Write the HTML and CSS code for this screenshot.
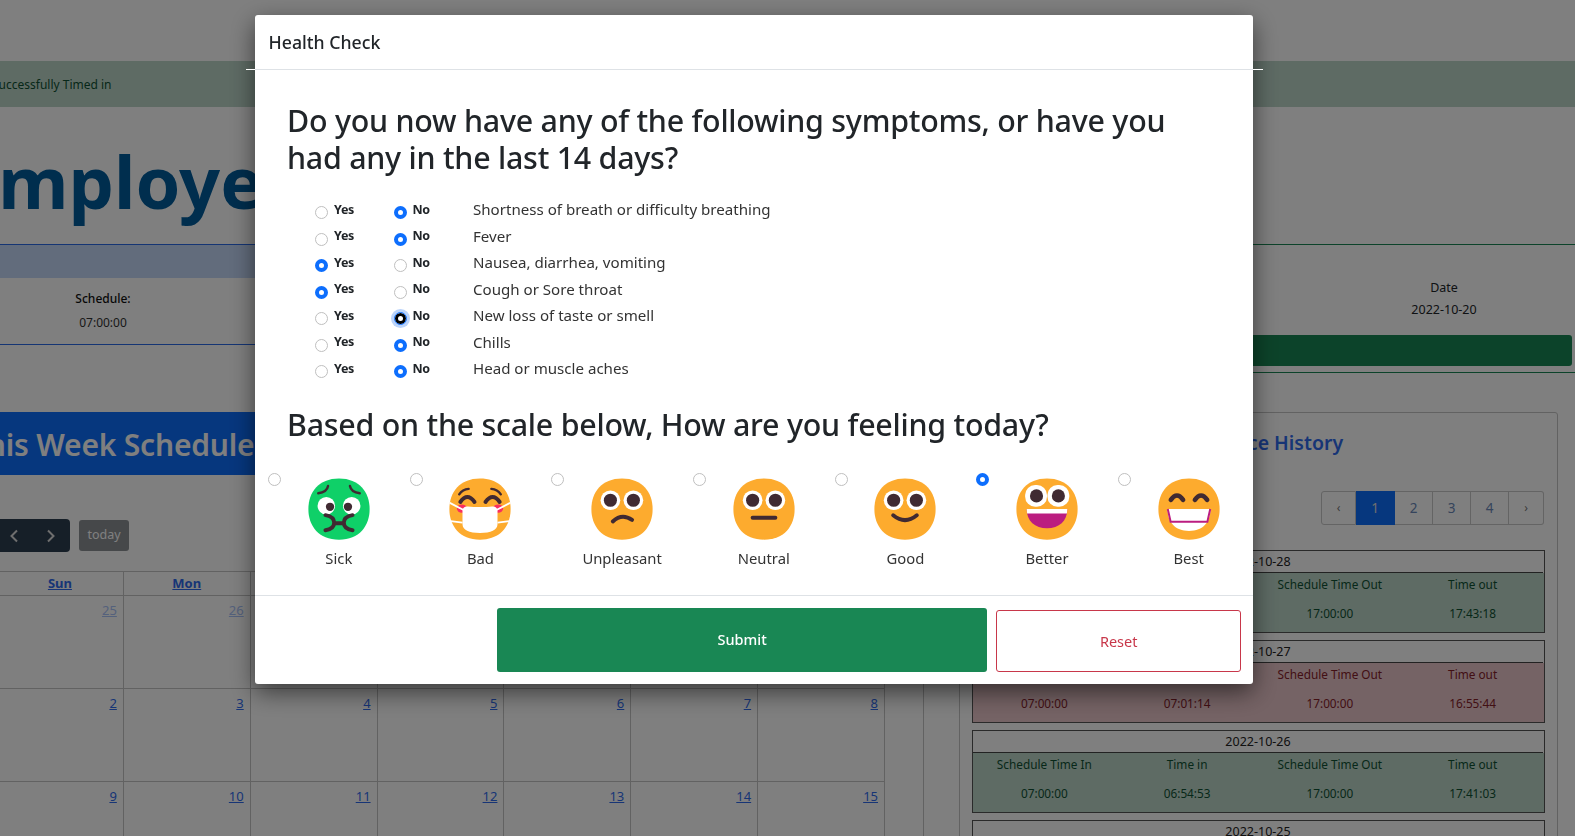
FILE: index.html
```html
<!DOCTYPE html>
<html lang="en">
<head>
<meta charset="utf-8">
<title>Employee Attendance</title>
<link rel="stylesheet" href="styles.css">
</head>
<body>
<main class="page">
  <div class="alert">Successfully Timed in</div>
  <h1 class="title">Employee Attendance</h1>
  <section class="status">
    <div class="status-left">
      <div class="band"></div>
      <div class="sched"><div class="sched-cell"><strong>Schedule:</strong><span>07:00:00</span></div></div>
    </div>
    <div class="status-right">
      <div class="date-cell"><strong>Date</strong><span>2022-10-20</span></div>
      <div class="green-bar"></div>
    </div>
  </section>
  <section class="lower">
    <div class="left-col">
      <div class="banner">This Week Schedule</div>
      <div class="toolbar">
        <div class="nav-group">
          <svg class="chev" viewBox="0 0 12 16"><path d="M8.500 2.500 3 8l5.500 5.500"/></svg>
          <svg class="chev" viewBox="0 0 12 16"><path d="M3.500 2.500 9 8l-5.500 5.500"/></svg>
        </div>
        <div class="today">today</div>
      </div>
      <div class="calendar">
        <a class="dow">Sun</a><a class="dow">Mon</a><a class="dow">Tue</a><a class="dow">Wed</a><a class="dow">Thu</a><a class="dow">Fri</a><a class="dow">Sat</a>
        <div class="day dim"><a>25</a></div><div class="day dim"><a>26</a></div><div class="day dim"><a>27</a></div><div class="day dim"><a>28</a></div><div class="day dim"><a>29</a></div><div class="day dim"><a>30</a></div><div class="day"><a>1</a></div>
        <div class="day"><a>2</a></div><div class="day"><a>3</a></div><div class="day"><a>4</a></div><div class="day"><a>5</a></div><div class="day"><a>6</a></div><div class="day"><a>7</a></div><div class="day"><a>8</a></div>
        <div class="day"><a>9</a></div><div class="day"><a>10</a></div><div class="day"><a>11</a></div><div class="day"><a>12</a></div><div class="day"><a>13</a></div><div class="day"><a>14</a></div><div class="day"><a>15</a></div>
      </div>
    </div>
    <div class="history">
      <h3 class="history-title">Attendance History</h3>
      <div class="pager"><span class="pg edge">‹</span><span class="pg on">1</span><span class="pg">2</span><span class="pg">3</span><span class="pg">4</span><span class="pg edge">›</span></div>
      <div class="rec">
        <div class="rec-date">2022-10-28</div>
        <div class="rec-body ok"><span>Schedule Time In</span><span>Time in</span><span>Schedule Time Out</span><span>Time out</span><b>07:00:00</b><b>06:52:10</b><b>17:00:00</b><b>17:43:18</b></div>
      </div>
      <div class="rec">
        <div class="rec-date">2022-10-27</div>
        <div class="rec-body bad"><span>Schedule Time In</span><span>Time in</span><span>Schedule Time Out</span><span>Time out</span><b>07:00:00</b><b>07:01:14</b><b>17:00:00</b><b>16:55:44</b></div>
      </div>
      <div class="rec">
        <div class="rec-date">2022-10-26</div>
        <div class="rec-body ok"><span>Schedule Time In</span><span>Time in</span><span>Schedule Time Out</span><span>Time out</span><b>07:00:00</b><b>06:54:53</b><b>17:00:00</b><b>17:41:03</b></div>
      </div>
      <div class="rec">
        <div class="rec-date">2022-10-25</div>
      </div>
    </div>
  </section>
</main>

<div class="backdrop"></div>

<form class="modal">
  <header class="modal-head"><h5 class="modal-title">Health Check</h5></header>
  <div class="rule"></div>
  <div class="modal-body">
    <h2 class="q q-first">Do you now have any of the following symptoms, or have you had any in the last 14 days?</h2>
    <div class="symptoms">
      <div class="sym"><label class="opt"><input type="radio" name="s1">Yes</label><label class="opt"><input type="radio" name="s1" checked>No</label><span>Shortness of breath or difficulty breathing</span></div>
      <div class="sym"><label class="opt"><input type="radio" name="s2">Yes</label><label class="opt"><input type="radio" name="s2" checked>No</label><span>Fever</span></div>
      <div class="sym"><label class="opt"><input type="radio" name="s3" checked>Yes</label><label class="opt"><input type="radio" name="s3">No</label><span>Nausea, diarrhea, vomiting</span></div>
      <div class="sym"><label class="opt"><input type="radio" name="s4" checked>Yes</label><label class="opt"><input type="radio" name="s4">No</label><span>Cough or Sore throat</span></div>
      <div class="sym"><label class="opt"><input type="radio" name="s5">Yes</label><label class="opt"><input class="focus" type="radio" name="s5" checked>No</label><span>New loss of taste or smell</span></div>
      <div class="sym"><label class="opt"><input type="radio" name="s6">Yes</label><label class="opt"><input type="radio" name="s6" checked>No</label><span>Chills</span></div>
      <div class="sym"><label class="opt"><input type="radio" name="s7">Yes</label><label class="opt"><input type="radio" name="s7" checked>No</label><span>Head or muscle aches</span></div>
    </div>
    <h2 class="q q-second">Based on the scale below, How are you feeling today?</h2>
  </div>
  <div class="scale">
    <label class="feel"><input type="radio" name="feel">
      <svg class="face" viewBox="0 0 32 32"><path class="skin-green" d="M16 30C25.330 30 30 23.730 30 16C30 8.270 25.330 2 16 2C6.660 2 2 8.270 2 16C2 23.730 6.660 30 16 30Z"/><circle class="white" cx="10.200" cy="14.500" r="4"/><circle class="white" cx="21.800" cy="14.500" r="4"/><circle class="ink" cx="11.900" cy="15" r="1.900"/><circle class="ink" cx="20.100" cy="15" r="1.900"/><path class="line thin" d="M6.500 8.800C9 8.500 10.700 7.200 11 5.500M25.500 8.800C23 8.500 21.300 7.200 21 5.500"/><path class="line" d="M9.800 18.800C12.500 19.300 13.800 20.800 13.800 22.300C13.800 23.900 12.500 25.300 9.800 25.700M22.200 18.800C19.500 19.300 18.200 20.800 18.200 22.300C18.200 23.900 19.500 25.300 22.200 25.700M13.800 22.500H18.200"/></svg>
      <span>Sick</span></label>
    <label class="feel"><input type="radio" name="feel">
      <svg class="face" viewBox="0 0 32 32"><path class="skin" d="M16 30C25.330 30 30 23.730 30 16C30 8.270 25.330 2 16 2C6.660 2 2 8.270 2 16C2 23.730 6.660 30 16 30Z"/><ellipse class="blush" cx="7.700" cy="15.800" rx="2.300" ry="1.900"/><ellipse class="blush" cx="24.300" cy="15.800" rx="2.300" ry="1.900"/><path class="line" d="M7 12.800Q10.200 8.300 13.500 12.800M18.500 12.800Q21.800 8.300 25 12.800"/><path class="line thin" d="M6.500 9.300Q8 7 10.800 6.800M25.500 9.300Q24 7 21.200 6.800"/><path class="strap" d="M2.200 13.200 8.500 16.500M29.800 13.200 23.500 16.500M2.600 21.500 8 22.200M29.400 21.500 24 22.200"/><path class="white" d="M8 17C8 15.500 9 14.600 10.500 14.900L13 15.100H19L21.500 14.900C23 14.600 24 15.500 24 17V23C24 25.500 21 27 16 27C11 27 8 25.500 8 23Z"/></svg>
      <span>Bad</span></label>
    <label class="feel"><input type="radio" name="feel">
      <svg class="face" viewBox="0 0 32 32"><path class="skin" d="M16 30C25.330 30 30 23.730 30 16C30 8.270 25.330 2 16 2C6.660 2 2 8.270 2 16C2 23.730 6.660 30 16 30Z"/><circle class="white" cx="10.700" cy="12" r="4.500"/><circle class="white" cx="21.200" cy="12" r="4.500"/><circle class="ink" cx="10.700" cy="12" r="3"/><circle class="ink" cx="21.200" cy="12" r="3"/><path class="line" d="M11.800 21.700Q16 17.700 20.600 21"/></svg>
      <span>Unpleasant</span></label>
    <label class="feel"><input type="radio" name="feel">
      <svg class="face" viewBox="0 0 32 32"><path class="skin" d="M16 30C25.330 30 30 23.730 30 16C30 8.270 25.330 2 16 2C6.660 2 2 8.270 2 16C2 23.730 6.660 30 16 30Z"/><circle class="white" cx="10.800" cy="12" r="4.500"/><circle class="white" cx="21.200" cy="12" r="4.500"/><circle class="ink" cx="10.800" cy="12" r="3"/><circle class="ink" cx="21.200" cy="12" r="3"/><path class="line" d="M10.800 20H21.200"/></svg>
      <span>Neutral</span></label>
    <label class="feel"><input type="radio" name="feel">
      <svg class="face" viewBox="0 0 32 32"><path class="skin" d="M16 30C25.330 30 30 23.730 30 16C30 8.270 25.330 2 16 2C6.660 2 2 8.270 2 16C2 23.730 6.660 30 16 30Z"/><circle class="white" cx="10.800" cy="12" r="4.500"/><circle class="white" cx="21.200" cy="12" r="4.500"/><circle class="ink" cx="10.800" cy="12" r="3"/><circle class="ink" cx="21.200" cy="12" r="3"/><path class="line" d="M10.600 18.900Q16 23.300 21.400 18.900"/></svg>
      <span>Good</span></label>
    <label class="feel"><input type="radio" name="feel" checked>
      <svg class="face" viewBox="0 0 32 32"><path class="skin" d="M16 30C25.330 30 30 23.730 30 16C30 8.270 25.330 2 16 2C6.660 2 2 8.270 2 16C2 23.730 6.660 30 16 30Z"/><rect class="white" x="6" y="5" width="10" height="10" rx="4.600"/><rect class="white" x="16.200" y="5" width="10" height="10" rx="4.600"/><circle class="ink" cx="11.200" cy="10" r="3"/><circle class="ink" cx="21.200" cy="10" r="3"/><path class="magenta" d="M6.700 16H25.300C25.300 21.500 21.500 24.800 16 24.800C10.500 24.800 6.700 21.500 6.700 16Z"/><path class="white" d="M6.700 16H25.300L25.100 18H6.900Z"/></svg>
      <span>Better</span></label>
    <label class="feel"><input type="radio" name="feel">
      <svg class="face" viewBox="0 0 32 32"><path class="skin" d="M16 30C25.330 30 30 23.730 30 16C30 8.270 25.330 2 16 2C6.660 2 2 8.270 2 16C2 23.730 6.660 30 16 30Z"/><path class="white" d="M6.200 16H25.800C25.800 22 22.500 26 16 26C9.500 26 6.200 22 6.200 16Z"/><path class="magenta-line" d="M6.300 16 7.600 21.800H24.400L25.700 16"/><path class="line thick" d="M7.700 11.800Q10.500 7.800 13.300 11.800M18.700 11.800Q21.500 7.800 24.300 11.800"/></svg>
      <span>Best</span></label>
  </div>
  <footer class="modal-foot">
    <button class="btn-submit" type="button">Submit</button>
    <button class="btn-reset" type="button">Reset</button>
  </footer>
</form>
</body>
</html>
```
FILE: styles.css
```css
* { box-sizing: border-box; }
html, body { margin: 0; height: 100%; overflow: hidden; }
body { font-family: "Noto Sans", "Open Sans", sans-serif; color: #212529; background: #fff; font-size: 13px; }

.page { width: 1575px; height: 836px; overflow: hidden; padding-top: 61px; }
.alert { height: 46px; background: #bcd6c9; color: #0f5132; line-height: 47px; font-size: 12px; margin-left: -8px; }
.title { height: 137px; margin: 0 0 0 -42px; color: #005c9c; font-size: 72px; font-weight: 700; line-height: 148px; white-space: nowrap; }

.status { display: flex; height: 129px; align-items: flex-start; }
.status-left { width: 800px; height: 101px; border-top: 1px solid #2a6ae8; border-bottom: 1px solid #2a6ae8; }
.band { height: 33px; background: #c4d8f8; }
.sched { padding-top: 12px; }
.sched-cell { width: 206px; display: flex; flex-direction: column; align-items: center; gap: 7px; font-size: 12px; }
.sched-cell strong { font-weight: 500; color: #111; }
.sched-cell span { color: #333; }
.status-right { width: 775px; height: 129px; border-top: 1px solid #198754; border-bottom: 1px solid #198754; display: flex; flex-direction: column; padding-top: 34px; }
.date-cell { margin-left: 544px; width: 200px; display: flex; flex-direction: column; align-items: center; gap: 4px; font-size: 12.500px; line-height: 18px; }
.date-cell strong { font-weight: 400; }
.green-bar { margin: 16px 3px 0 0; height: 31px; background: #198754; border-radius: 3px; }

.lower { display: flex; padding-top: 39px; }
.left-col { width: 959px; flex: none; background: linear-gradient(#c4c4c4, #c4c4c4) 923px 0 / 1px 100% no-repeat; }
.banner { width: 400px; height: 63px; background: #0d6efd; color: #fff; margin-left: -30px; font-size: 30px; letter-spacing: -.2px; font-weight: 600; line-height: 66px; white-space: nowrap; }
.toolbar { display: flex; align-items: center; gap: 9px; height: 33px; margin-top: 44px; }
.nav-group { width: 70px; height: 33px; background: #2c3e50; border-radius: 0 4px 4px 0; display: flex; align-items: center; gap: 23px; padding-left: 8px; }
.chev { width: 13px; height: 16px; fill: none; stroke: #ddd; stroke-width: 2; }
.today { width: 50px; height: 31px; background: #8c9095; color: #fff; border-radius: 3px; font-size: 12.500px; line-height: 30px; text-align: center; }
.calendar { margin: 19px 0 0 -3px; width: 888px; display: grid; grid-template-columns: repeat(7, 126.860px); grid-template-rows: 24px; grid-auto-rows: 93px; border-top: 1px solid #c4c4c4; border-right: 1px solid #c4c4c4; }
.dow { grid-row: 1; height: 24px; text-align: center; font-weight: 700; font-size: 13px; line-height: 22px; color: #2f6bed; text-decoration: underline; border-right: 1px solid #c4c4c4; border-bottom: 1px solid #c4c4c4; }
.day { border-right: 1px solid #c4c4c4; border-bottom: 1px solid #c4c4c4; text-align: right; padding: 5px 6px 0 0; font-size: 13px; color: #2f6bed; text-decoration: underline; }
.day.dim { color: #a8c2f8; }

.history { width: 599px; height: 460px; border: 1px solid #c4c4c4; padding: 12px; border-radius: 3px; flex: none; }
.history-title { margin: 5px 0 0 187px; font-size: 19.500px; font-weight: 600; line-height: 26px; color: #2f6bed; white-space: nowrap; }
.pager { display: flex; justify-content: flex-end; margin: 35px 1px 25px 0; height: 34px; }
.pg { width: 38px; border: 1px solid #c8c8c8; border-left: 0; text-align: center; line-height: 32px; font-size: 13.500px; color: #6a88b8; }
.pg.edge { width: 35px; font-size: 12px; color: #777; }
.pg.edge:first-child { border-left: 1px solid #c8c8c8; border-radius: 3px 0 0 3px; }
.pg.edge:last-child { border-radius: 0 3px 3px 0; }
.pg.on { background: #0d6efd; color: #ddd; border-color: #0d6efd; width: 39px; }
.rec { border: 1px solid #555; margin-bottom: 7px; height: 83px; }
.rec-date { height: 22px; text-align: center; line-height: 21px; font-size: 12.500px; color: #222; border-bottom: 1px solid #444; margin-right: 1px; }
.rec-body { height: 59px; display: grid; grid-template-columns: repeat(4, 1fr); grid-template-rows: 21px 1fr; text-align: center; font-size: 11.800px; }
.rec-body span, .rec-body b { font-weight: 400; line-height: 19px; padding-top: 2px; }
.rec-body b { line-height: 38px; padding-top: 0; }
.rec-body.ok { background: #bcd6c9; color: #0f5132; }
.rec-body.bad { background: #ebc6ca; color: #842029; }

.backdrop { position: fixed; inset: 0; background: rgba(0,0,0,.5); }

.modal { position: fixed; left: 255px; top: 15px; width: 998px; height: 669px; background: #fff; border-radius: 3px; box-shadow: 0 8px 24px rgba(0,0,0,.55); display: flex; flex-direction: column; }
.modal-head { height: 54px; display: flex; align-items: center; padding-left: 13.500px; }
.modal-title { margin: 0; font-size: 17.700px; font-weight: 500; color: #212529; }
.rule { height: 1px; margin: 0 -10px 0 -9px; background: linear-gradient(90deg, #fff 9px, #dee2e6 9px, #dee2e6 calc(100% - 10px), #fff calc(100% - 10px)); }
.modal-body { padding: 32px 32px 0; }
.q { margin: 0; font-size: 30.400px; line-height: 37px; letter-spacing: -.25px; font-weight: 500; color: #212529; }
.symptoms { margin-top: 21.500px; padding-left: 28px; }
.sym { display: grid; grid-template-columns: 78.500px 79.500px 1fr; height: 26.500px; align-items: center; font-size: 15.100px; color: #333; line-height: 20px; }
.sym > span { margin-top: -3px; }
.opt { display: flex; align-items: center; gap: 6px; padding-bottom: 2px; font-size: 12.500px; letter-spacing: -.3px; font-weight: 700; color: #212529; }
input[type=radio] { appearance: none; -webkit-appearance: none; margin: 0; width: 13px; height: 13px; border: 1px solid #bfbfbf; border-radius: 50%; background: #fff; flex: none; }
input[type=radio]:checked { border: 4px solid #0d6efd; }
.opt input { margin-top: 6px; }
input.focus[type=radio]:checked { border: 1.500px solid #0d6efd; box-shadow: inset 0 0 0 3px #000, 0 0 0 3px #bcd4fa; }
.q-second { margin-top: 23.200px; }
.scale { display: grid; grid-template-columns: repeat(7, 141.650px); padding-left: 13px; height: 152px; padding-top: 31px; }
.feel { display: grid; grid-template-columns: 1fr; justify-items: center; align-content: start; position: relative; font-size: 14.800px; color: #333; }
.feel input { position: absolute; left: 0; top: -1px; }
.face { width: 70px; height: 70px; display: block; }
.feel span { margin-top: 3px; line-height: 22px; }
.skin { fill: #fdab2e; }
.skin-green { fill: #0fd068; }
.white { fill: #fff; }
.ink { fill: #402a32; }
.line { fill: none; stroke: #402a32; stroke-width: 1.800; stroke-linecap: round; }
.line.thin { stroke-width: 1.100; }
.line.thick { stroke-width: 2.100; }
.blush { fill: #f92f60; }
.strap { fill: none; stroke: #fff; stroke-width: .8; }
.magenta { fill: #bb1d80; }
.magenta-line { fill: none; stroke: #bb1d80; stroke-width: .9; }
.modal-foot { border-top: 1px solid #dee2e6; flex: 1; display: flex; align-items: flex-end; padding: 0 12px 12px 242px; gap: 9px; }
button { font-family: inherit; border-radius: 3px; font-size: 14.500px; cursor: pointer; }
.btn-submit { width: 491px; height: 64px; border: 0; background: #198754; color: #fff; font-weight: 500; padding-bottom: 4px; }
.btn-reset { width: 245px; height: 62px; border: 1px solid #c8374a; background: #fff; color: #c8374a; }
```
